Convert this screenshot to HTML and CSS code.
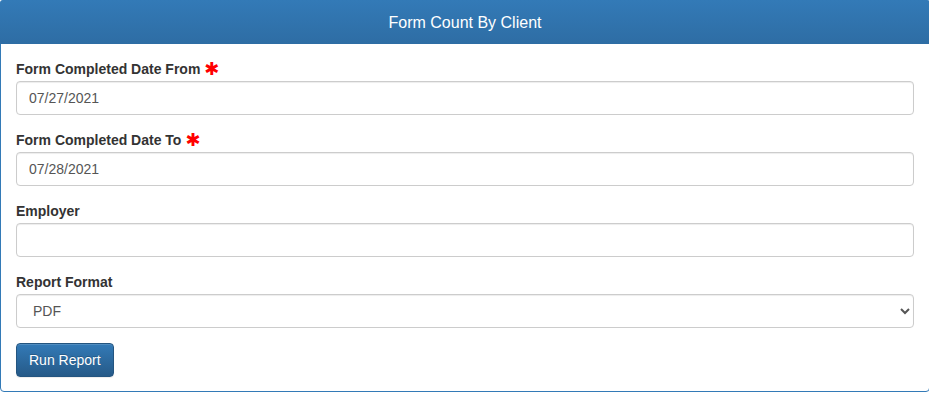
FILE: index.html
```html
<!DOCTYPE html>
<html>
<head>
<meta charset="utf-8">
<link rel="stylesheet" href="styles.css">
</head>
<body>
<div class="panel">
  <div class="panel-heading">Form Count By Client</div>
  <div class="panel-body">
    <div class="form-group">
      <label class="label">Form Completed Date From <span class="req">✱</span></label>
      <input class="control" type="text" value="07/27/2021">
    </div>
    <div class="form-group">
      <label class="label">Form Completed Date To <span class="req">✱</span></label>
      <input class="control" type="text" value="07/28/2021">
    </div>
    <div class="form-group">
      <label class="label">Employer</label>
      <input class="control" type="text" value="">
    </div>
    <div class="form-group">
      <label class="label">Report Format</label>
      <select class="control select">
        <option>PDF</option>
        <option>Excel</option>
      </select>
    </div>
    <button class="btn">Run Report</button>
  </div>
</div>
</body>
</html>
```
FILE: styles.css
```css
* { box-sizing: border-box; }
html, body { margin: 0; padding: 0; background: #fff; overflow: hidden; }
body {
  font-family: "Liberation Sans", Arial, sans-serif;
  font-size: 14px;
  line-height: 20px;
  color: #333;
}
.panel {
  width: 930px;
  height: 392px;
  border: 1px solid #337ab7;
  border-radius: 4px;
  display: flex;
  flex-direction: column;
}
.panel-heading {
  height: 44px;
  flex: none;
  display: flex;
  align-items: center;
  justify-content: center;
  color: #fff;
  font-size: 16px;
  background: linear-gradient(to bottom, #337ab7 0%, #2e6da4 100%);
  border-radius: 3px 3px 0 0;
  margin: -1px -1px 0 -1px;
  padding-top: 1px;
}
.panel-body {
  padding: 15px;
}
.form-group {
  display: flex;
  flex-direction: column;
  margin-bottom: 15px;
}
.label {
  font-weight: bold;
  height: 20px;
  margin-bottom: 2px;
  display: flex;
  align-items: center;
  gap: 4px;
}
.req {
  color: #f00;
  font-family: "DejaVu Sans", sans-serif;
  font-size: 18px;
  line-height: 20px;
  height: 20px;
}
.control {
  display: block;
  width: 100%;
  height: 34px;
  padding: 6px 12px;
  font-family: "Liberation Sans", Arial, sans-serif;
  font-size: 14px;
  color: #555;
  background: #fff;
  border: 1px solid #ccc;
  border-radius: 4px;
  box-shadow: inset 0 1px 1px rgba(0,0,0,0.075);
  outline: none;
}
.select {
  padding: 6px 8px 6px 12px;
}
.btn {
  display: block;
  height: 34px;
  padding: 6px 12px;
  font-family: "Liberation Sans", Arial, sans-serif;
  font-size: 14px;
  color: #fff;
  text-shadow: 0 -1px 0 rgba(0,0,0,0.2);
  background: linear-gradient(to bottom, #337ab7 0%, #265a88 100%);
  border: 1px solid #245580;
  border-radius: 4px;
  box-shadow: inset 0 1px 0 rgba(255,255,255,0.15), 0 1px 1px rgba(0,0,0,0.075);
  cursor: pointer;
}
```
